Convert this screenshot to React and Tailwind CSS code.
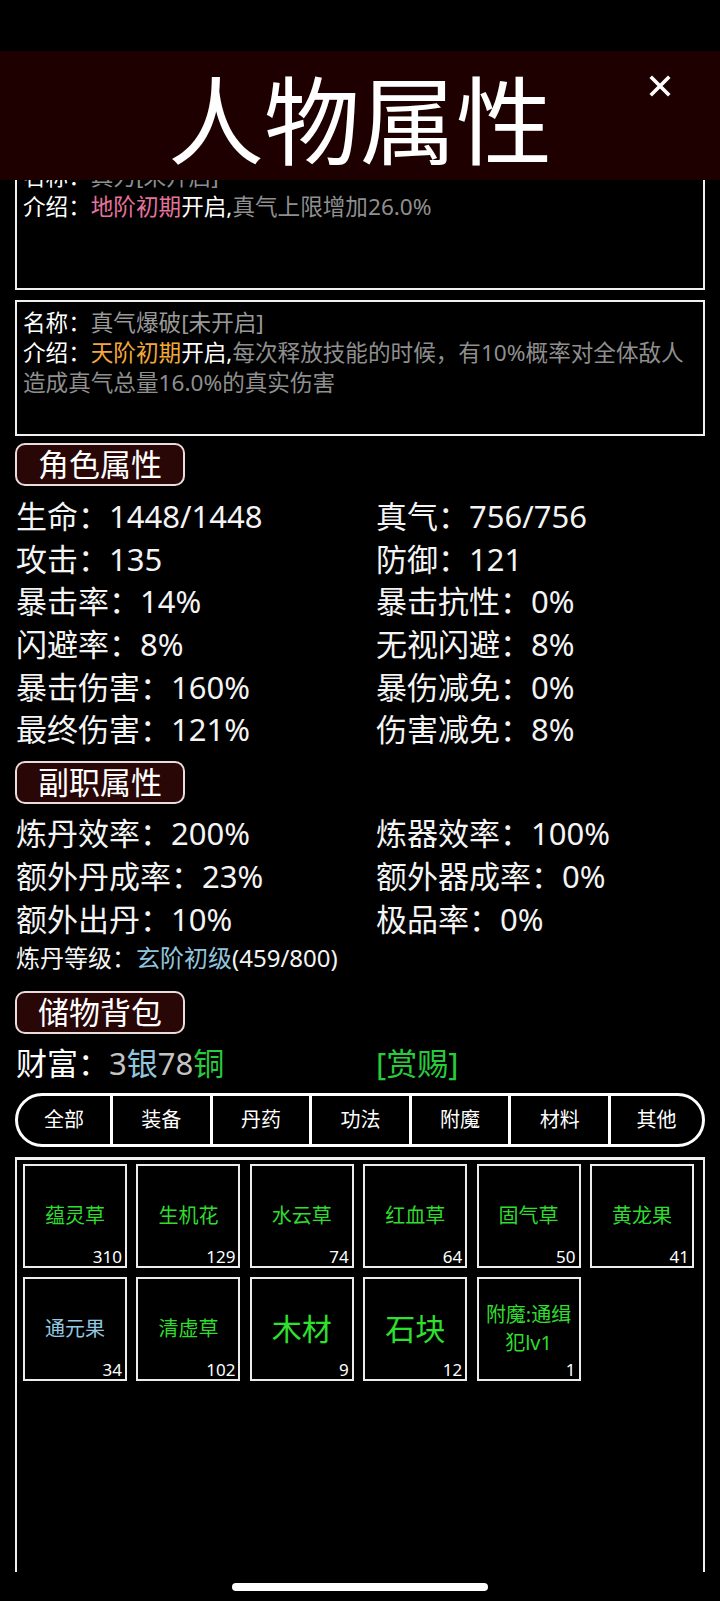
import React from 'react';

// character sheet: title bar over a scrolled page
const combatStats = [
  ['生命', '1448/1448', '真气', '756/756'],
  ['攻击', '135', '防御', '121'],
  ['暴击率', '14%', '暴击抗性', '0%'],
  ['闪避率', '8%', '无视闪避', '8%'],
  ['暴击伤害', '160%', '暴伤减免', '0%'],
  ['最终伤害', '121%', '伤害减免', '8%'],
];

const craftStats = [
  ['炼丹效率', '200%', '炼器效率', '100%'],
  ['额外丹成率', '23%', '额外器成率', '0%'],
  ['额外出丹', '10%', '极品率', '0%'],
];

const tabs = ['全部', '装备', '丹药', '功法', '附魔', '材料', '其他'];

const items = [
  { name: '蕴灵草', count: 310 },
  { name: '生机花', count: 129 },
  { name: '水云草', count: 74 },
  { name: '红血草', count: 64 },
  { name: '固气草', count: 50 },
  { name: '黄龙果', count: 41 },
  { name: '通元果', count: 34, blue: true },
  { name: '清虚草', count: 102 },
  { name: '木材', count: 9, big: true },
  { name: '石块', count: 12, big: true },
  { name: '附魔:通缉犯lv1', count: 1 },
];

const SectionTag = ({ children, className = '' }) => (
  <div
    className={`w-[170px] h-[43px] rounded-[10px] border-2 border-[#eadcdc] bg-[#2a0707] flex items-center justify-center text-[31px] text-white leading-none ${className}`}
  >
    {children}
  </div>
);

const StatGrid = ({ rows, className = '' }) => (
  <div className={`grid grid-cols-[360px_1fr] pl-px text-[31px] text-[#f4f4f4] ${className}`}>
    {rows.map((r) => (
      <React.Fragment key={r[0]}>
        <div className="h-[42.7px] leading-[42.7px] whitespace-nowrap">
          {r[0]}：{r[1]}
        </div>
        <div className="h-[42.7px] leading-[42.7px] whitespace-nowrap">
          {r[2]}：{r[3]}
        </div>
      </React.Fragment>
    ))}
  </div>
);

export default function App() {
  return (
    <div className="relative w-[720px] h-[1601px] overflow-hidden bg-black font-['Noto_Sans','Noto_Sans_CJK_SC',sans-serif] text-white">
      {/* page content (scrolled under the title bar) */}
      <div className="px-[15px] pt-[154px]">
        {/* skill boxes */}
        <div className="h-[136px] border-2 border-[#f0f0f0] px-[6px] pt-[6px] text-[22.6px] leading-[30px] whitespace-nowrap">
          <div>
            名称：<span className="text-[#8f8f8f]">真力[未开启]</span>
          </div>
          <div>
            介绍：<span className="text-[#e4739b]">地阶初期</span>开启,
            <span className="text-[#8f8f8f]">真气上限增加26.0%</span>
          </div>
        </div>
        <div className="mt-[10px] h-[136px] border-2 border-[#f0f0f0] px-[6px] pt-[6px] text-[22.6px] leading-[30px] whitespace-nowrap">
          <div>
            名称：<span className="text-[#999999]">真气爆破[未开启]</span>
          </div>
          <div>
            介绍：<span className="text-[#f4a83a]">天阶初期</span>开启,
            <span className="text-[#8f8f8f]">每次释放技能的时候，有10%概率对全体敌人</span>
          </div>
          <div className="text-[#8f8f8f]">造成真气总量16.0%的真实伤害</div>
        </div>

        <SectionTag className="mt-[7px]">角色属性</SectionTag>
        <StatGrid rows={combatStats} className="mt-[9px]" />

        <SectionTag className="mt-[10px]">副职属性</SectionTag>
        <StatGrid rows={craftStats} className="mt-[8px]" />
        <div className="pl-px h-[36px] leading-[36px] text-[24px] text-[#f4f4f4] whitespace-nowrap">
          炼丹等级：<span className="text-[#8fc6de]">玄阶初级</span>(459/800)
        </div>

        <SectionTag className="mt-[15px]">储物背包</SectionTag>
        <div className="mt-[8px] grid grid-cols-[360px_1fr] pl-px h-[42px] leading-[42px] text-[31px] whitespace-nowrap">
          <div>
            财富：<span className="text-[#c4c4c4]">3</span>
            <span className="text-[#8fc6de]">银</span>
            <span className="text-[#c4c4c4]">78</span>
            <span className="text-[#27cc3c]">铜</span>
          </div>
          <div className="text-[#27cc3c]">[赏赐]</div>
        </div>

        {/* category tabs */}
        <div className="mt-[9px] h-[54px] rounded-full border-[3px] border-white overflow-hidden grid grid-cols-[92px_repeat(5,1fr)_94px]">
          {tabs.map((t, i) => (
            <div
              key={t}
              className={`flex items-center justify-center text-[20px] text-white ${i > 0 ? 'border-l-[3px] border-white' : ''}`}
            >
              {t}
            </div>
          ))}
        </div>

        {/* inventory */}
        <div className="mt-[10px] h-[415px] border-t-[3px] border-x-2 border-[#f0f0f0] pl-[6px] pt-[4px]">
          <div className="grid grid-cols-[repeat(6,104px)] auto-rows-[104px] gap-x-[9.4px] gap-y-[9px]">
            {items.map((it) => (
              <div
                key={it.name}
                className="relative border-2 border-[#ececec] flex items-center justify-center px-[4px] text-center"
              >
                <span
                  className={
                    it.big
                      ? 'text-[30px] leading-[36px] text-[#2fe02f]'
                      : `text-[20px] leading-[28px] ${it.blue ? 'text-[#92c8e0]' : 'text-[#2fdc2f]'}`
                  }
                >
                  {it.name}
                </span>
                <span className="absolute right-[3px] bottom-[1px] text-[17px] leading-none text-white">
                  {it.count}
                </span>
              </div>
            ))}
          </div>
        </div>
      </div>

      {/* title bar over the scrolled content */}
      <div className="absolute left-0 top-0 w-full">
        <div className="h-[51px] bg-black" />
        <div className="relative h-[129px] bg-[#1f0000] flex items-center justify-center">
          <span className="font-['Noto_Sans_CJK_SC',sans-serif] text-[96px] leading-none text-white">人物属性</span>
          <button className="absolute left-[649px] top-[24px] w-[22px] h-[22px] flex items-center justify-center">
            <svg width="22" height="22" viewBox="0 0 22 22">
              <path d="M3 3 L19 19 M19 3 L3 19" stroke="#fff" strokeWidth="3.6" strokeLinecap="square" />
            </svg>
          </button>
        </div>
      </div>

      {/* gesture bar */}
      <div className="absolute left-[232px] top-[1583px] w-[256px] h-[8px] rounded-full bg-white" />
    </div>
  );
}
